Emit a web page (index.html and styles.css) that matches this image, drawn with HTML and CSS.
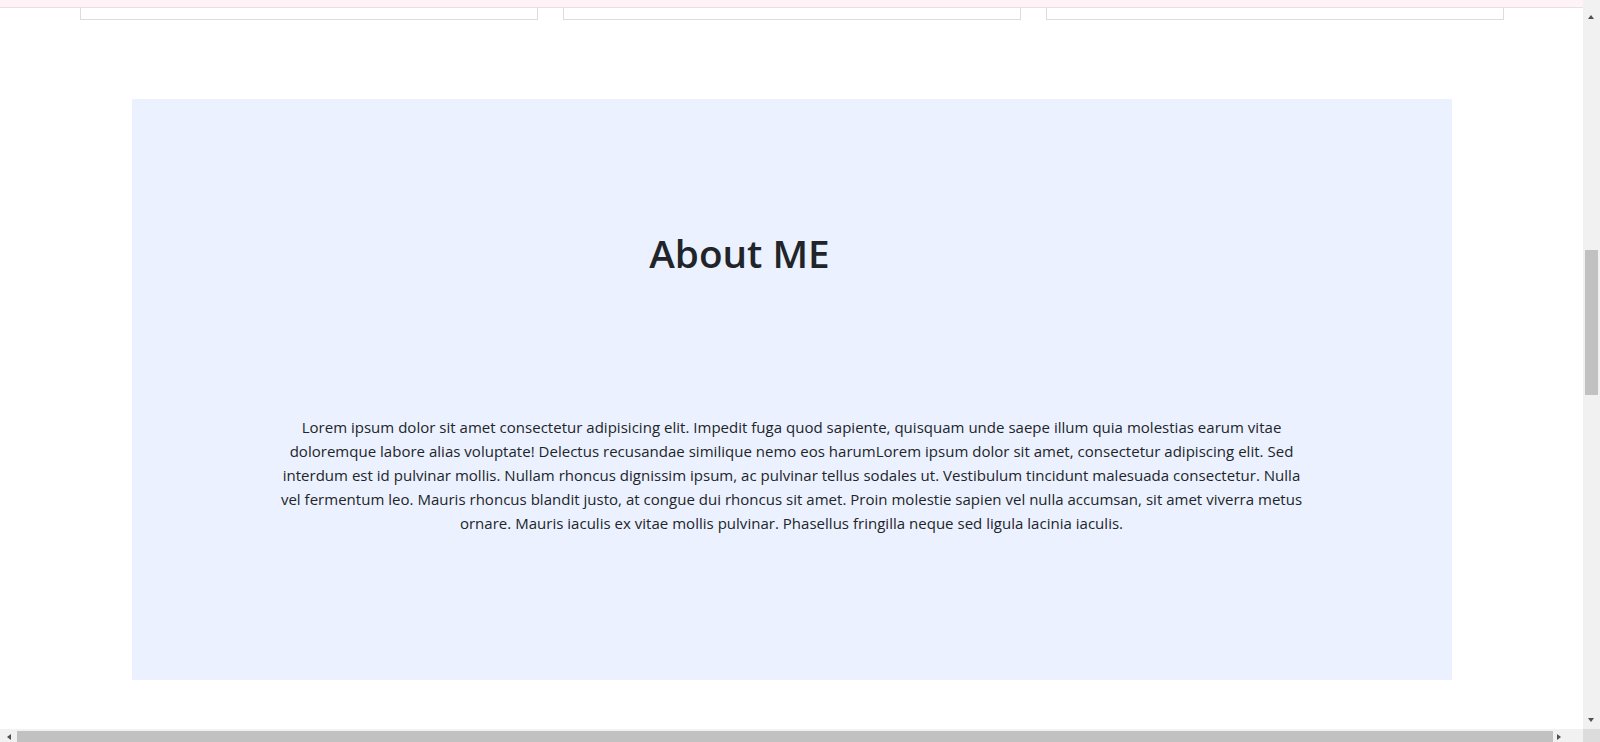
FILE: index.html
```html
<!DOCTYPE html>
<html lang="en">
<head>
<meta charset="utf-8">
<title>About ME</title>
<link rel="stylesheet" href="styles.css">
</head>
<body>
<div class="window">
  <div class="viewport">
    <div class="topbar"></div>
    <div class="cards">
      <div class="card"></div>
      <div class="card"></div>
      <div class="card"></div>
    </div>
    <section class="about">
      <h1 class="about-title">About ME</h1>
      <p class="about-text">Lorem ipsum dolor sit amet consectetur adipisicing elit. Impedit fuga quod sapiente, quisquam unde saepe illum quia molestias earum vitae<br>doloremque labore alias voluptate! Delectus recusandae similique nemo eos harumLorem ipsum dolor sit amet, consectetur adipiscing elit. Sed<br>interdum est id pulvinar mollis. Nullam rhoncus dignissim ipsum, ac pulvinar tellus sodales ut. Vestibulum tincidunt malesuada consectetur. Nulla<br>vel fermentum leo. Mauris rhoncus blandit justo, at congue dui rhoncus sit amet. Proin molestie sapien vel nulla accumsan, sit amet viverra metus<br>ornare. Mauris iaculis ex vitae mollis pulvinar. Phasellus fringilla neque sed ligula lacinia iaculis.</p>
    </section>
  </div>
  <div class="vscroll">
    <div class="arrow arrow-up"></div>
    <div class="vtrack"><div class="vthumb"></div></div>
    <div class="arrow arrow-down"></div>
  </div>
  <div class="hscroll">
    <div class="harrow"><div class="arrow arrow-left"></div></div>
    <div class="hthumb"></div>
    <div class="harrow"><div class="arrow arrow-right"></div></div>
  </div>
  <div class="corner"></div>
</div>
</body>
</html>
```
FILE: styles.css
```css
* { box-sizing: border-box; }
html, body { margin: 0; padding: 0; overflow: hidden; background: #fff; }
body { font-family: "Open Sans", "Noto Sans", sans-serif; color: #212529; }

.window {
  width: 1600px;
  height: 742px;
  display: grid;
  grid-template-columns: 1583px 17px;
  grid-template-rows: 729px 13px;
}

.viewport { overflow: hidden; background: #fff; }

.topbar {
  height: 8px;
  background: #fff3f7;
  border-bottom: 1px solid #e9dfe3;
}

.cards {
  display: flex;
  justify-content: center;
  gap: 25px;
}
.card {
  width: 458px;
  height: 12px;
  border: 1px solid #dcdcdc;
  border-top: none;
}

.about {
  width: 1320px;
  height: 581px;
  margin: 79px auto 0;
  background: #ebf1fe;
  padding-top: 131px;
}
.about-title {
  margin: 0 104px 0 0;
  text-align: center;
  font-size: 38.7px;
  font-weight: 600;
  line-height: 1.2;
}
.about-text {
  margin: 139px 0 0;
  text-align: center;
  font-size: 15px;
  letter-spacing: 0.02px;
  line-height: 24px;
}

.vscroll {
  background: #f1f1f1;
  display: flex;
  flex-direction: column;
}
.vtrack { flex: 1; padding-top: 231px; }
.vthumb {
  width: 13px;
  height: 145px;
  margin-left: 2px;
  background: #c1c1c1;
}
.arrow { width: 0; height: 0; }
.arrow-up {
  margin: 15px 0 0 5px;
  border-left: 3.5px solid transparent;
  border-right: 3.5px solid transparent;
  border-bottom: 4px solid #505050;
}
.arrow-down {
  margin: 0 0 7px 5px;
  border-left: 3.5px solid transparent;
  border-right: 3.5px solid transparent;
  border-top: 4px solid #505050;
}

.hscroll {
  background: #f1f1f1;
  display: flex;
  align-items: flex-start;
}
.harrow {
  width: 17px;
  height: 13px;
  display: flex;
  align-items: flex-end;
  justify-content: center;
  padding-bottom: 2px;
}
.harrow:last-child { width: 30px; justify-content: flex-start; padding-left: 4px; }
.hthumb {
  flex: 1;
  height: 11px;
  margin-top: 2px;
  background: #c1c1c1;
}
.arrow-left {
  border-top: 3.5px solid transparent;
  border-bottom: 3.5px solid transparent;
  border-right: 4px solid #505050;
}
.arrow-right {
  border-top: 3.5px solid transparent;
  border-bottom: 3.5px solid transparent;
  border-left: 4px solid #505050;
}
.corner { background: #dcdcdc; }
```
